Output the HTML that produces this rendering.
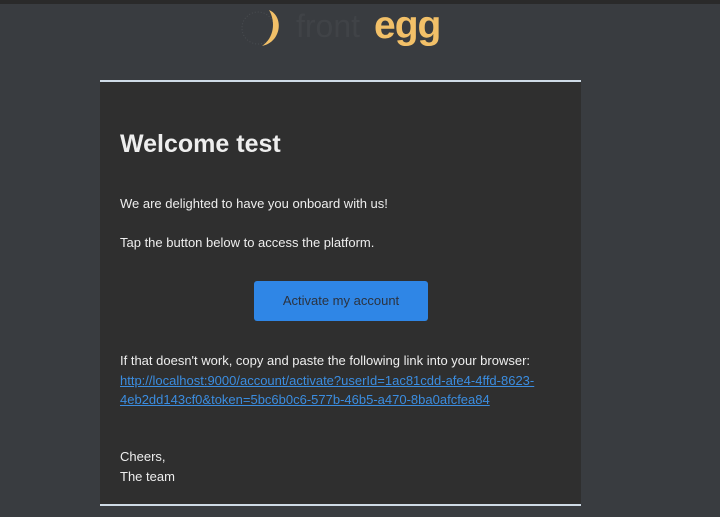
<!DOCTYPE html>
<html><head><style>
body{margin:0;width:720px;height:517px;background:#393c40;font-family:"Liberation Sans",sans-serif;position:relative;overflow:hidden}
.top{position:absolute;left:0;top:0;width:720px;height:4px;background:#2a2a2a}
.logo{position:absolute;left:240px;top:4px}
.egg{position:absolute;left:374px;top:4px;color:#f2c068;font-weight:bold;font-size:39px;letter-spacing:-1px}
.front{position:absolute;left:296px;top:8px;color:#404347;font-size:32px}
.card{position:absolute;left:100px;top:80px;width:481px;height:426px;background:#2f2f2f;border-top:2px solid #cfdbe6;border-bottom:2px solid #cfdbe6;box-sizing:border-box}
.t{position:absolute;left:20px;color:#eeeeee;font-size:13px}
h1{position:absolute;left:20px;top:48px;margin:0;font-size:25px;color:#eeeeee;font-weight:bold}
.btn{position:absolute;left:154px;top:199px;width:174px;height:40px;background:#2f86e6;border-radius:3px;color:#2b3340;font-size:13px;text-align:center;line-height:40px}
a{color:#3b8de0;text-decoration:underline}
</style></head><body>
<div class="top"></div>
<svg class="logo" width="50" height="46" viewBox="0 0 50 46"><circle cx="18" cy="24" r="16" fill="none" stroke="#4a4d51" stroke-dasharray="1 2"/><path d="M29 6 C44 12 42 38 22 42 C34 34 36 18 29 6Z" fill="#f2c068"/></svg>
<div class="front">front</div>
<div class="egg">egg</div>
<div class="card">
<h1>Welcome test</h1>
<div class="t" style="top:114px">We are delighted to have you onboard with us!</div>
<div class="t" style="top:153px">Tap the button below to access the platform.</div>
<div class="btn">Activate my account</div>
<div class="t" style="top:269px;line-height:19.5px">If that doesn't work, copy and paste the following link into your browser:<br><a>http://localhost:9000/account/activate?userId=1ac81cdd-afe4-4ffd-8623-<br>4eb2dd143cf0&amp;token=5bc6b0c6-577b-46b5-a470-8ba0afcfea84</a></div>
<div class="t" style="top:365px;line-height:19.5px">Cheers,<br>The team</div>
</div>
</body></html>
